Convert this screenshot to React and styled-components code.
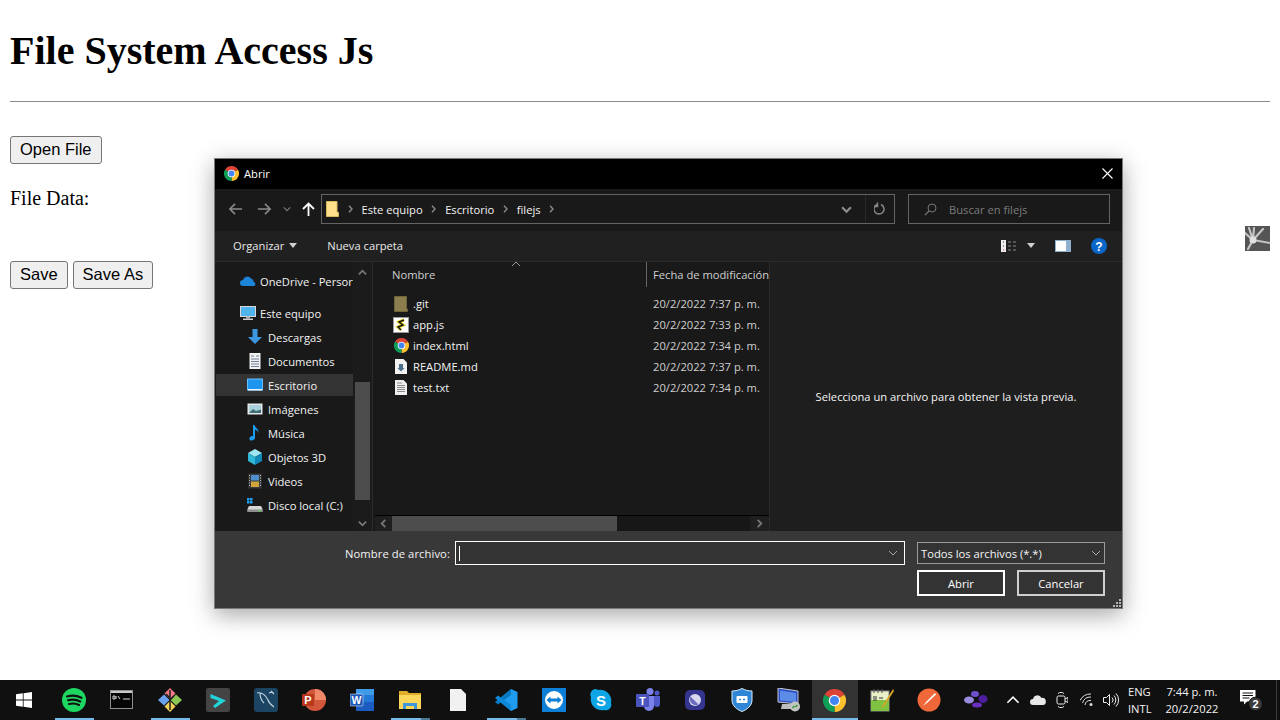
import React from 'react';
import styled, { createGlobalStyle } from 'styled-components';

const GlobalStyle = createGlobalStyle`
  html, body {
    margin: 0;
    height: 100%;
    background: #fff;
    overflow: hidden;
  }
`;

const Desktop = styled.div`
  position: relative;
  width: 1280px;
  height: 720px;
  display: flex;
  flex-direction: column;
  font-family: 'Liberation Serif', serif;
  color: #000;
`;

const PageBody = styled.main`
  flex: 1;
  padding: 0 10px;
`;

const PageTitle = styled.h1`
  margin: 29px 0 28px;
  font-size: 40px;
  line-height: 44px;
  font-weight: bold;
`;

const Rule = styled.hr`
  margin: 0 0 34px;
  border: 0;
  height: 1px;
  background: #8c8c8c;
`;

const PageButton = styled.button`
  height: 28px;
  margin-right: 5px;
  padding: 0 9px 1px;
  background: #efefef;
  border: 1px solid #767676;
  border-radius: 3px;
  font-family: 'Liberation Sans', sans-serif;
  font-size: 16.5px;
  color: #000;
`;

const FileLabel = styled.p`
  margin: 23px 0 52px;
  font-size: 20px;
  line-height: 22px;
`;

const FloatingThumb = styled.svg`
  position: absolute;
  left: 1245px;
  top: 226px;
  width: 25px;
  height: 25px;
`;

/* the open dialog */
const Dialog = styled.section`
  position: absolute;
  left: 214px;
  top: 158px;
  width: 907px;
  height: 449px;
  display: flex;
  flex-direction: column;
  border: 1px solid #7a7a7a;
  background: #191919;
  box-shadow: 0 6px 22px rgba(0, 0, 0, 0.35);
  font-family: 'Open Sans', 'Noto Sans', sans-serif;
  font-size: 11.2px;
  color: #fff;
`;

const TitleBar = styled.header`
  height: 30px;
  box-sizing: border-box;
  flex: none;
  display: flex;
  align-items: center;
  gap: 5px;
  padding: 0 9px 1px;
  background: #000;
`;

const TitleText = styled.span`
  flex: 1;
  color: #fff;
`;

const NavBand = styled.div`
  height: 42px;
  box-sizing: border-box;
  flex: none;
  display: flex;
  align-items: center;
  padding: 0 11px 2px 6px;
  background: #191919;
`;

const NavIcon = styled.span`
  width: ${(p) => p.$w || 29}px;
  flex: none;
  display: flex;
  justify-content: center;
  align-items: center;
`;

const AddressBar = styled.div`
  width: 574px;
  height: 30px;
  box-sizing: border-box;
  flex: none;
  display: flex;
  align-items: center;
  padding-left: 4px;
  border: 1px solid #636363;
  background: #191919;
`;

const Crumb = styled.span`
  color: #f2f2f2;
  white-space: nowrap;
`;

const CrumbChevron = styled.svg`
  width: 5px;
  height: 8px;
  margin: 0 9px 0 8.5px;
  flex: none;
`;

const AddressEnd = styled.div`
  margin-left: auto;
  display: flex;
  align-items: center;
  height: 100%;
`;

const AddressButton = styled.span`
  width: ${(p) => p.$w}px;
  height: 100%;
  display: flex;
  justify-content: center;
  align-items: center;
  border-left: ${(p) => (p.$split ? '1px solid #2a2a2a' : '0')};
`;

const SearchBox = styled.div`
  width: 202px;
  height: 30px;
  box-sizing: border-box;
  flex: none;
  margin-left: 13px;
  display: flex;
  align-items: center;
  gap: 12px;
  padding-left: 15px;
  border: 1px solid #636363;
  color: #7c7c7c;
`;

const ToolBar = styled.div`
  height: 31px;
  box-sizing: border-box;
  flex: none;
  display: flex;
  align-items: center;
  padding: 0 15px 1px 18px;
  background: #202020;
  border-bottom: 1px solid #2b2b2b;
  color: #e8e8e8;
`;

const ToolLabel = styled.span`
  display: flex;
  align-items: center;
  gap: 5px;
  margin-right: ${(p) => p.$gap || 0}px;
`;

const ToolGroup = styled.div`
  margin-left: auto;
  display: flex;
  align-items: center;
`;

const Caret = styled.span`
  width: 0;
  height: 0;
  margin: ${(p) => p.$margin || '0'};
  border-left: 4.5px solid transparent;
  border-right: 4.5px solid transparent;
  border-top: 5px solid #cfcfcf;
`;

const HelpIcon = styled.svg`
  width: 16px;
  height: 16px;
  margin-left: 20px;
`;

const Browser = styled.div`
  flex: 1;
  min-height: 0;
  display: flex;
`;

const Sidebar = styled.nav`
  width: 158px;
  box-sizing: border-box;
  flex: none;
  display: flex;
  overflow: hidden;
  border-right: 1px solid #2b2b2b;
`;

const TreeList = styled.div`
  width: 138px;
  box-sizing: border-box;
  flex: none;
  padding: 8px 0 0 1px;
`;

const TreeRow = styled.div`
  height: 22px;
  margin-bottom: ${(p) => p.$after || 2}px;
  display: flex;
  align-items: center;
  gap: ${(p) => (p.$child ? 5 : 4)}px;
  padding-left: ${(p) => (p.$child ? 31 : 24)}px;
  background: ${(p) => (p.$selected ? '#333333' : 'transparent')};
  color: #f2f2f2;
  white-space: nowrap;
  overflow: hidden;
`;

const TreeIcon = styled.svg`
  width: 16px;
  height: 16px;
  flex: none;
`;

const ScrollColumn = styled.div`
  flex: 1;
  display: flex;
  flex-direction: column;
  align-items: center;
  background: #1b1b1b;
`;

const ScrollEnd = styled.span`
  height: ${(p) => p.$h}px;
  box-sizing: border-box;
  padding-top: ${(p) => p.$top || 0}px;
  display: flex;
  align-items: center;
`;

const ScrollGap = styled.span`
  height: 100px;
`;

const ScrollThumb = styled.span`
  width: 15px;
  height: 118px;
  background: #4d4d4d;
`;

const ListPane = styled.div`
  width: 397px;
  box-sizing: border-box;
  flex: none;
  position: relative;
  display: flex;
  flex-direction: column;
  border-right: 1px solid #2b2b2b;
`;

const SortMark = styled.svg`
  position: absolute;
  left: 138px;
  top: -1px;
  width: 10px;
  height: 6px;
`;

const ListHead = styled.div`
  height: 25px;
  flex: none;
  display: flex;
  align-items: flex-start;
  color: #cfcfcf;
  overflow: hidden;
`;

const HeadName = styled.span`
  width: 274px;
  height: 25px;
  flex: none;
  line-height: 25px;
  box-sizing: border-box;
  padding-left: 19px;
  border-right: 1px solid #666;
`;

const HeadDate = styled.span`
  padding-left: 6px;
  line-height: 25px;
  white-space: nowrap;
`;

const ListRows = styled.div`
  flex: 1;
  padding-top: 6px;
`;

const FileRow = styled.div`
  height: 21px;
  display: flex;
  align-items: center;
`;

const FileName = styled.span`
  width: 244px;
  box-sizing: border-box;
  flex: none;
  padding-left: 4px;
  color: #f2f2f2;
`;

const FileIconSlot = styled.span`
  width: 16px;
  margin-left: 20px;
  display: flex;
  justify-content: center;
  flex: none;
`;

const FileDate = styled.span`
  color: #cfcfcf;
  white-space: nowrap;
`;

const HScroll = styled.div`
  height: 16px;
  box-sizing: border-box;
  flex: none;
  display: flex;
  align-items: center;
  margin-left: 2px;
  background: #171717;
  border-top: 1px solid #000;
`;

const HArrow = styled.span`
  width: ${(p) => p.$w}px;
  height: 100%;
  flex: none;
  display: flex;
  justify-content: center;
  align-items: center;
  background: #1f1f1f;
`;

const HThumb = styled.span`
  width: 225px;
  height: 100%;
  background: #4d4d4d;
`;

const HTrack = styled.span`
  flex: 1;
`;

const PreviewPane = styled.div`
  flex: 1;
  display: flex;
  justify-content: center;
  align-items: center;
  background: #1e1e1e;
  color: #f5f5f5;
`;

const Footer = styled.footer`
  height: 77px;
  flex: none;
  position: relative;
  box-sizing: border-box;
  padding: 10px 17px 0 0;
  display: flex;
  flex-direction: column;
  align-items: flex-end;
  gap: 5px;
  background: #383838;
`;

const FooterRow = styled.div`
  display: flex;
  align-items: center;
`;

const FieldLabel = styled.label`
  margin-right: 5px;
  letter-spacing: 0.1px;
  color: #f5f5f5;
`;

const NameField = styled.div`
  width: 450px;
  height: 24px;
  box-sizing: border-box;
  margin-right: 12px;
  display: flex;
  align-items: center;
  justify-content: space-between;
  padding: 0 6px 0 3px;
  border: 1px solid #fff;
  background: #333;
`;

const TextCaret = styled.span`
  width: 1px;
  height: 15px;
  background: #fff;
`;

const TypeSelect = styled.div`
  width: 188px;
  height: 22px;
  box-sizing: border-box;
  display: flex;
  align-items: center;
  justify-content: space-between;
  padding: 0 3px 0 3px;
  border: 1px solid #9b9b9b;
  background: #333;
  color: #f5f5f5;
`;

const DialogButton = styled.button`
  width: 88px;
  height: 26px;
  margin-left: ${(p) => p.$left || 0}px;
  padding: 0;
  background: #333;
  border: ${(p) => (p.$primary ? '2px solid #fff' : '2px solid #cfcfcf')};
  font: inherit;
  color: #fff;
`;

const ResizeGrip = styled.svg`
  position: absolute;
  right: 1px;
  bottom: 1px;
  width: 9px;
  height: 9px;
`;

/* the taskbar */
const Taskbar = styled.footer`
  height: 40px;
  flex: none;
  display: flex;
  align-items: stretch;
  background: #101010;
  font-family: 'Open Sans', 'Noto Sans', sans-serif;
  font-size: 11.2px;
  color: #f2f2f2;
`;

const StartButton = styled.div`
  width: 50px;
  flex: none;
  display: flex;
  justify-content: center;
  align-items: center;
  padding-right: 2px;
  box-sizing: border-box;
`;

const TaskItem = styled.div`
  position: relative;
  width: ${(p) => p.$w || 47.33}px;
  flex: none;
  display: flex;
  justify-content: center;
  align-items: center;
  background: ${(p) => (p.$active ? '#333333' : 'transparent')};
  &::after {
    content: '';
    display: ${(p) => (p.$open || p.$active ? 'block' : 'none')};
    position: absolute;
    left: ${(p) => (p.$active ? 0 : 4.5)}px;
    right: ${(p) => (p.$active ? 0 : 4.5)}px;
    bottom: 0;
    height: 2px;
    background: ${(p) =>
      p.$stacked ? 'linear-gradient(90deg, #76b9ed 76%, #4d7894 76%)' : '#76b9ed'};
  }
`;

const TaskIcon = styled.svg`
  width: 24px;
  height: 24px;
`;

const TrayGroup = styled.div`
  display: flex;
  align-items: stretch;
  margin-left: 1px;
`;

const TrayIcon = styled.span`
  width: 24.5px;
  flex: none;
  display: flex;
  justify-content: center;
  align-items: center;
`;

const LangBlock = styled.div`
  width: 29px;
  flex: none;
  margin-left: 4.5px;
  display: flex;
  flex-direction: column;
  justify-content: center;
  line-height: 17px;
`;

const ClockBlock = styled.div`
  width: 70px;
  flex: none;
  display: flex;
  flex-direction: column;
  justify-content: center;
  align-items: center;
  line-height: 17px;
  white-space: nowrap;
`;

const NotifyButton = styled.div`
  width: 49px;
  flex: none;
  display: flex;
  justify-content: center;
  align-items: center;
  border-right: 1px solid #3c3c3c;
`;

const ChromeIcon = ({ size = 16 }) => (
  <svg width={size} height={size} viewBox="0 0 24 24">
    <path d="M12 12 1.6 6A12 12 0 0 1 22.4 6Z" fill="#db4437" />
    <path d="M12 12 22.4 6A12 12 0 0 1 12 24Z" fill="#fbc02d" />
    <path d="M12 12 12 24A12 12 0 0 1 1.6 6Z" fill="#0f9d58" />
    <circle cx="12" cy="12" r="6" fill="#fff" />
    <circle cx="12" cy="12" r="4.7" fill="#4285f4" />
  </svg>
);

const Chevron = ({ dir = 'down', color = '#aaa', size = 10, weight = 1.6 }) => {
  const d = {
    down: 'M1 3 5 7 9 3',
    up: 'M1 7 5 3 9 7',
    left: 'M7 1 3 5 7 9',
    right: 'M3 1 7 5 3 9',
  }[dir];
  return (
    <svg width={size} height={size} viewBox="0 0 10 10">
      <path d={d} fill="none" stroke={color} strokeWidth={weight} />
    </svg>
  );
};

const Arrow = ({ dir, color }) => (
  <svg width="15" height="14" viewBox="0 0 16 14" style={{ transform: dir === 'right' ? 'scaleX(-1)' : 'none' }}>
    <path d="M15 7H2M7.5 1.5 2 7l5.5 5.5" fill="none" stroke={color} strokeWidth="1.7" />
  </svg>
);

const CrumbMark = () => (
  <CrumbChevron viewBox="0 0 5 8">
    <path d="M1 .8 4 4 1 7.2" fill="none" stroke="#8a8a8a" strokeWidth="1.4" />
  </CrumbChevron>
);

const FolderSmall = () => (
  <svg width="13" height="16" viewBox="0 0 13 16">
    <path d="M.5.5h10.5v10.5l1.5 .5v4H.5Z" fill="#ffe08a" stroke="#d9b75f" />
  </svg>
);

const treeIcons = {
  onedrive: (
    <path d="M3 13a3 3 0 0 1 0-6 4.5 4.5 0 0 1 8-1.5 3.6 3.6 0 0 1 2.6 3.6A2 2 0 0 1 14 13Z" fill="#1c84d9" />
  ),
  pc: (
    <>
      <rect x="0.5" y="1.5" width="15" height="10" fill="#4fb5ec" stroke="#d8d8d8" />
      <rect x="6" y="11.5" width="4" height="2" fill="#aaa" />
      <rect x="3" y="13.5" width="10" height="1.5" fill="#d0d0d0" />
    </>
  ),
  down: <path d="M5.5 0h5v8H15l-7 7-7-7h4.5Z" fill="#3d97e0" />,
  doc: (
    <>
      <path d="M2.5 0h11v16h-11Z" fill="#f2f2f2" />
      <path d="M4 3h3M9 3h3M4 6h8M4 8.5h8M4 11h8M4 13.5h8" stroke="#6d7f94" strokeWidth="1" />
    </>
  ),
  desk: (
    <>
      <rect x="0.5" y="2" width="15" height="11" fill="#1c95ee" stroke="#68bdf5" />
      <rect x="1" y="12" width="14" height="1.5" fill="#e6f4ff" />
    </>
  ),
  image: (
    <>
      <rect x="0.5" y="2.5" width="15" height="11" fill="#e6e6e6" />
      <rect x="2" y="4" width="12" height="8" fill="#a9d1dc" />
      <path d="M2 12 6 8l3 2 5-1.5V12Z" fill="#3c6f73" />
    </>
  ),
  music: <path d="M6 0h1.5c.5 3 4.5 3.500 4 8-.8-2.500-2.500-3-3.500-3.300V12.500C8 14.500 5.800 16 3.800 15.500 1.800 15 2 12.500 3.800 11.500c.8-.4 1.600-.5 2.200-.3Z" fill="#1c9cf0" />,
  cube: (
    <>
      <path d="M8 0 15 4 8 8 1 4Z" fill="#9ee7f2" />
      <path d="M1 4 8 8V16L1 12Z" fill="#2fb7d6" />
      <path d="M15 4 8 8V16L15 12Z" fill="#1087b8" />
    </>
  ),
  video: (
    <>
      <rect x="1.500" y="0.500" width="13" height="15" fill="#3b3b3b" />
      <rect x="4" y="2" width="8" height="5.500" fill="#4e8fd0" />
      <rect x="4" y="8.500" width="8" height="5.500" fill="#d0a53d" />
      <path d="M2.500 2v12M13.500 2v12" stroke="#bbb" strokeDasharray="1 1.500" />
    </>
  ),
  disk: (
    <>
      <path d="M0 1h2.500v2.500H0ZM3 1h2.500v2.500H3ZM0 4h2.500v2.500H0ZM3 4h2.500v2.500H3Z" fill="#1ea1f1" />
      <path d="M2 9h12l1.500 3v3H.5v-3Z" fill="#d6d6d6" />
      <rect x="1" y="12.500" width="14" height="2.500" fill="#8d8d8d" />
      <rect x="11.500" y="13" width="2" height="1.500" fill="#48e048" />
    </>
  ),
};

const TreeItem = ({ icon, label, child, selected, after }) => (
  <TreeRow $child={child} $selected={selected} $after={after}>
    <TreeIcon viewBox="0 0 16 16">{treeIcons[icon]}</TreeIcon>
    {label}
  </TreeRow>
);

const fileIcons = {
  git: (
    <svg width="14" height="16" viewBox="0 0 14 16">
      <path d="M.5.5h12v12l1 .5v2.500H.5Z" fill="#8b7d4e" stroke="#6f6439" />
    </svg>
  ),
  js: (
    <svg width="16" height="16" viewBox="0 0 16 16">
      <rect x="0.500" y="0.500" width="15" height="15" fill="#fff" stroke="#999" />
      <path d="M11 3 6 5l4 3-5 2 3 3" fill="none" stroke="#e6d21e" strokeWidth="3" />
      <path d="M11 3 6 5l4 3-5 2 3 3" fill="none" stroke="#111" strokeWidth="1.400" />
    </svg>
  ),
  html: <ChromeIcon size={15} />,
  md: (
    <svg width="12" height="15" viewBox="0 0 12 15">
      <path d="M0 0h8.500L12 3.500V15H0Z" fill="#f2f2f2" />
      <path d="M4 5h4v4h1.500L6 12.500 2.500 9H4Z" fill="#4b6f8a" />
    </svg>
  ),
  txt: (
    <svg width="12" height="15" viewBox="0 0 12 15">
      <path d="M0 0h8.500L12 3.500V15H0Z" fill="#efefef" />
      <path d="M2 3h5M2 5.500h8M2 7.500h8M2 9.500h8M2 11.500h8" stroke="#8a8a8a" />
    </svg>
  ),
};

const files = [
  { name: '.git', date: '20/2/2022 7:37 p. m.', icon: 'git' },
  { name: 'app.js', date: '20/2/2022 7:33 p. m.', icon: 'js' },
  { name: 'index.html', date: '20/2/2022 7:34 p. m.', icon: 'html' },
  { name: 'README.md', date: '20/2/2022 7:37 p. m.', icon: 'md' },
  { name: 'test.txt', date: '20/2/2022 7:34 p. m.', icon: 'txt' },
];

const taskIcons = [
  {
    key: 'spotify',
    w: 48,
    open: true,
    draw: (
      <>
        <circle cx="12" cy="12" r="12" fill="#1ed760" />
        <path d="M5 8.500c5-1.500 10-1 14.500 1.300M6 12.300c4.300-1.200 8.500-.8 12.300 1.200M7 16c3.500-.9 7-.6 10 1" fill="none" stroke="#111" strokeWidth="2.100" strokeLinecap="round" />
      </>
    ),
  },
  {
    key: 'cmd',
    w: 48,
    draw: (
      <>
        <rect x="0.500" y="2.500" width="22" height="18" fill="#050505" stroke="#8e8e8e" />
        <rect x="1" y="3" width="21" height="2" fill="#c9c9c9" />
        <path d="M3 8h2v3H3ZM6 8v3M8 8l2 3M13 11h7" stroke="#d8d8d8" fill="none" />
      </>
    ),
  },
  {
    key: 'git',
    w: 48,
    open: true,
    draw: (
      <>
        <path d="M12 0 17.500 5.500 12 11 6.500 5.500Z" fill="#ee7a85" />
        <path d="M12.500 12 18 6.500 24 12 18 17.500Z" fill="#8cc653" />
        <path d="M11.500 12 6 6.500 0 12 6 17.500Z" fill="#6aa2ef" />
        <path d="M12 13 17.500 18.500 12 24 6.500 18.500Z" fill="#f2d25a" />
        <path d="M12 2v20M8 6l4 4v4M16 8l-4 4" stroke="#222" strokeWidth="1.500" fill="none" />
      </>
    ),
  },
  {
    key: 'sublime',
    w: 48,
    draw: (
      <>
        <rect width="24" height="24" rx="2" fill="#444" />
        <path d="M4.500 6 20 12.500 9 20 7 18 13 13 4.500 10Z" fill="#21d3d8" />
      </>
    ),
  },
  {
    key: 'mysql',
    w: 48,
    draw: (
      <>
        <rect width="24" height="24" rx="3" fill="#1c4563" />
        <path d="M3 5c5-1 8 1 11 7 1 3 3 5 6 7M6 5c0 4 1 7 4 10M17 3l3 3M15 5l3-1" fill="none" stroke="#c8d8e4" strokeWidth="1.100" />
      </>
    ),
  },
  {
    key: 'ppt',
    w: 48,
    draw: (
      <>
        <circle cx="13" cy="12" r="11" fill="#d2563a" />
        <path d="M13 1A11 11 0 0 1 24 12H13Z" fill="#f0886a" />
        <rect x="0" y="6" width="12" height="12" rx="1" fill="#b7381c" />
        <text x="6" y="16" fontSize="11" fontFamily="Liberation Sans" fontWeight="bold" fill="#fff" textAnchor="middle">P</text>
      </>
    ),
  },
  {
    key: 'word',
    w: 48,
    draw: (
      <>
        <rect x="6" y="1" width="18" height="22" rx="1" fill="#1a5cc0" />
        <rect x="6" y="1" width="18" height="6" fill="#3f9be8" />
        <rect x="6" y="7" width="18" height="7" fill="#2379d6" />
        <rect x="0" y="6" width="13" height="12" rx="1" fill="#1b57b5" stroke="#fff" strokeWidth="0.500" />
        <text x="6.500" y="16" fontSize="10.500" fontFamily="Liberation Sans" fontWeight="bold" fill="#fff" textAnchor="middle">W</text>
      </>
    ),
  },
  {
    key: 'explorer',
    w: 48,
    open: true,
    stacked: true,
    draw: (
      <>
        <path d="M1 3h8l2 2H23V21H1Z" fill="#e2ac2b" />
        <rect x="1" y="7" width="22" height="14" fill="#fbd75b" />
        <path d="M5 21v-6h14v6h-3v-3H8v3Z" fill="#3d97d8" />
      </>
    ),
  },
  {
    key: 'file',
    w: 48,
    draw: <path d="M4 1h11l5 5v17H4Z" fill="#f1f1f1" />,
  },
  {
    key: 'vscode',
    w: 48,
    open: true,
    stacked: true,
    draw: (
      <>
        <path d="M17 1 23.500 4v16L17 23 5 12Z" fill="#1f9cf0" />
        <path d="M17 1 1 14l3 2.500L17 7Z" fill="#0a77c2" />
        <path d="M1 10l3-2.500L17 17v6Z" fill="#0d88d8" />
      </>
    ),
  },
  {
    key: 'teamviewer',
    w: 48,
    draw: (
      <>
        <rect width="24" height="24" fill="#0e7fd6" />
        <circle cx="12" cy="12" r="9" fill="#fff" />
        <path d="M4.500 12 8.500 8.500v2h7v-2l4 3.500-4 3.500v-2h-7v2Z" fill="#0e7fd6" />
      </>
    ),
  },
  {
    key: 'skype',
    w: 46.8,
    draw: (
      <>
        <path d="M6 1a5 5 0 0 1 3 1A11 11 0 0 1 22 15a5.500 5.500 0 0 1-7 7A11 11 0 0 1 2 9 5.500 5.500 0 0 1 6 1Z" fill="#0ea5e6" />
        <text x="12" y="17.500" fontSize="15" fontFamily="Liberation Sans" fontWeight="bold" fill="#fff" textAnchor="middle">S</text>
      </>
    ),
  },
  {
    key: 'teams',
    w: 46.8,
    draw: (
      <>
        <circle cx="14" cy="3.500" r="3.500" fill="#7b83eb" />
        <circle cx="21" cy="5" r="2.500" fill="#5059c9" />
        <path d="M8 8h10v10a5 5 0 0 1-10 0Z" fill="#7b83eb" />
        <path d="M18 8h6v8a3 3 0 0 1-6 0Z" fill="#5059c9" />
        <rect x="0" y="6" width="13" height="13" rx="1" fill="#4b53bc" />
        <text x="6.500" y="16.500" fontSize="10.500" fontFamily="Liberation Sans" fontWeight="bold" fill="#fff" textAnchor="middle">T</text>
      </>
    ),
  },
  {
    key: 'linear',
    w: 46.8,
    draw: (
      <>
        <rect x="2" y="2" width="20" height="20" rx="5" fill="#34358f" />
        <circle cx="12" cy="12" r="6" fill="#d8d8ef" />
        <path d="M7.500 8.500a6 6 0 0 0 8 8Z" fill="#6a6cc0" />
      </>
    ),
  },
  {
    key: 'shield',
    w: 46.8,
    draw: (
      <>
        <path d="M2 3c4 0 7-1 10-2.500C15 2 18 3 22 3v9c0 6-5 9.500-10 11.500C7 21.500 2 18 2 12Z" fill="#2f86d6" stroke="#d8ecfb" />
        <rect x="6.500" y="8" width="11" height="7" rx="1" fill="#fff" />
        <path d="M9 11.500h2M13 11.500h2" stroke="#2f86d6" strokeWidth="1.500" />
      </>
    ),
  },
  {
    key: 'remote',
    w: 46.8,
    draw: (
      <>
        <path d="M1 0 21 3v13L1 14Z" fill="#2a4fc4" stroke="#c8c8c8" />
        <path d="M3 2.500 19 5v9L3 12.500Z" fill="#5d8be8" />
        <path d="M5 16h9l2 5H4Z" fill="#bdbdbd" />
        <circle cx="18" cy="18.500" r="5" fill="#c4c4c4" />
        <path d="M15.500 20l2-2M18.500 19l2-2" stroke="#2f9a2f" strokeWidth="1.500" />
      </>
    ),
  },
];

const afterChrome = [
  {
    key: 'npp',
    draw: (
      <>
        <rect x="1" y="3" width="18" height="20" fill="#e8f0c8" stroke="#888" />
        <rect x="1" y="12" width="18" height="11" fill="#7fc241" />
        <path d="M4 1v4M8 1v4M12 1v4" stroke="#555" />
        <path d="M4 8v5M6 8v5M9 10h4" stroke="#333" />
        <path d="M23 1 13 17l-2 3 3-1.500L24 3Z" fill="#d9a423" />
      </>
    ),
  },
  {
    key: 'postman',
    draw: (
      <>
        <circle cx="12" cy="12" r="11.500" fill="#f0683a" />
        <path d="M18 5 9.500 13.500 6 18l4.500-3.500L19 6.500Z" fill="#fff" />
      </>
    ),
  },
  {
    key: 'blobs',
    draw: (
      <>
        <ellipse cx="5" cy="12" rx="5" ry="3.500" fill="#9a8be0" />
        <ellipse cx="11" cy="6" rx="4" ry="3" fill="#6d4fcf" />
        <ellipse cx="19" cy="11" rx="4.500" ry="4" fill="#4d1f9e" />
        <ellipse cx="13" cy="17" rx="5" ry="2.500" fill="#6a2fc0" />
      </>
    ),
  },
];

export default function App() {
  return (
    <>
      <GlobalStyle />
      <Desktop>
        <PageBody>
          <PageTitle>File System Access Js</PageTitle>
          <Rule />
          <PageButton>Open File</PageButton>
          <FileLabel>File Data:</FileLabel>
          <PageButton>Save</PageButton>
          <PageButton>Save As</PageButton>
        </PageBody>

        <FloatingThumb viewBox="0 0 25 25">
          <rect width="25" height="25" fill="#555" />
          <path d="M8 14 0 7M8 14 4 2M8 14 9 2M8 14 18 3M8 14 25 17M8 14 3 23" fill="none" stroke="#c4c4c4" strokeWidth="2.200" strokeLinecap="round" />
          <circle cx="8" cy="14" r="3.500" fill="#e2e2e2" />
        </FloatingThumb>

        <Dialog>
          <TitleBar>
            <ChromeIcon size={15} />
            <TitleText>Abrir</TitleText>
            <svg width="11" height="11" viewBox="0 0 11 11">
              <path d="M.5.5l10 10M10.500.5l-10 10" stroke="#fff" strokeWidth="1.100" />
            </svg>
          </TitleBar>

          <NavBand>
            <NavIcon $w={29}><Arrow dir="left" color="#8a8a8a" /></NavIcon>
            <NavIcon $w={29}><Arrow dir="right" color="#8a8a8a" /></NavIcon>
            <NavIcon $w={16}><Chevron color="#777" size={8} /></NavIcon>
            <NavIcon $w={26}>
              <svg width="13" height="14" viewBox="0 0 13 14">
                <path d="M6.500 14V2M1 7l5.500-5.500L12 7" fill="none" stroke="#fff" strokeWidth="1.800" />
              </svg>
            </NavIcon>
            <AddressBar>
              <FolderSmall />
              <CrumbMark />
              <Crumb>Este equipo</Crumb>
              <CrumbMark />
              <Crumb>Escritorio</Crumb>
              <CrumbMark />
              <Crumb>filejs</Crumb>
              <CrumbMark />
              <AddressEnd>
                <AddressButton $w={37}><Chevron color="#8f8f8f" size={11} weight={2} /></AddressButton>
                <AddressButton $w={28} $split>
                  <svg width="13" height="14" viewBox="0 0 13 14">
                    <path d="M3 2.500A5 5 0 1 0 7 2.500" fill="none" stroke="#888" strokeWidth="1.500" />
                    <path d="M3.500 0v4H0" fill="none" stroke="#888" strokeWidth="1.500" transform="translate(0 .5)" />
                  </svg>
                </AddressButton>
              </AddressEnd>
            </AddressBar>
            <SearchBox>
              <svg width="13" height="13" viewBox="0 0 13 13">
                <circle cx="8" cy="5" r="4" fill="none" stroke="#777" />
                <path d="M5 8 .8 12.200" stroke="#777" strokeWidth="1.200" />
              </svg>
              Buscar en filejs
            </SearchBox>
          </NavBand>

          <ToolBar>
            <ToolLabel $gap={30}>Organizar<Caret /></ToolLabel>
            <ToolLabel>Nueva carpeta</ToolLabel>
            <ToolGroup>
              <svg width="16" height="12" viewBox="0 0 16 12">
                <rect width="5" height="12" fill="#eee" />
                <path d="M2 2h1M2 6h1" stroke="#333" />
                <path d="M2 10h1" stroke="#c33" />
                <path d="M7 2h3M12 2h3M7 6h3M12 6h3M7 10h3M12 10h3" stroke="#888" />
              </svg>
              <Caret $margin="0 20.500px 0 9.500px" />
              <svg width="16" height="12" viewBox="0 0 16 12">
                <rect width="16" height="12" fill="#8fb0cc" />
                <rect x="1" y="1" width="10" height="10" fill="#fff" />
              </svg>
              <HelpIcon viewBox="0 0 16 16">
                <circle cx="8" cy="8" r="8" fill="#0a66c8" />
                <text x="8" y="12.500" fontSize="12" fontFamily="Liberation Sans" fontWeight="bold" fill="#fff" textAnchor="middle">?</text>
              </HelpIcon>
            </ToolGroup>
          </ToolBar>

          <Browser>
            <Sidebar>
              <TreeList>
                <TreeItem icon="onedrive" label="OneDrive - Persor" after={10} />
                <TreeItem icon="pc" label="Este equipo" />
                <TreeItem child icon="down" label="Descargas" />
                <TreeItem child icon="doc" label="Documentos" />
                <TreeItem child selected icon="desk" label="Escritorio" />
                <TreeItem child icon="image" label="Imágenes" />
                <TreeItem child icon="music" label="Música" />
                <TreeItem child icon="cube" label="Objetos 3D" />
                <TreeItem child icon="video" label="Videos" />
                <TreeItem child icon="disk" label="Disco local (C:)" />
              </TreeList>
              <ScrollColumn>
                <ScrollEnd $h={20}><Chevron dir="up" color="#777" size={9} weight={2} /></ScrollEnd>
                <ScrollGap />
                <ScrollThumb />
                <ScrollEnd $h={31} $top={15}><Chevron color="#777" size={9} weight={2} /></ScrollEnd>
              </ScrollColumn>
            </Sidebar>

            <ListPane>
              <SortMark viewBox="0 0 10 6">
                <path d="M1 5 5 1l4 4" fill="none" stroke="#9a9a9a" />
              </SortMark>
              <ListHead>
                <HeadName>Nombre</HeadName>
                <HeadDate>Fecha de modificación</HeadDate>
              </ListHead>
              <ListRows>
                {files.map((f) => (
                  <FileRow key={f.name}>
                    <FileIconSlot>{fileIcons[f.icon]}</FileIconSlot>
                    <FileName>{f.name}</FileName>
                    <FileDate>{f.date}</FileDate>
                  </FileRow>
                ))}
              </ListRows>
              <HScroll>
                <HArrow $w={17}><Chevron dir="left" color="#777" size={9} weight={2} /></HArrow>
                <HThumb />
                <HTrack />
                <HArrow $w={19}><Chevron dir="right" color="#777" size={9} weight={2} /></HArrow>
              </HScroll>
            </ListPane>

            <PreviewPane>Selecciona un archivo para obtener la vista previa.</PreviewPane>
          </Browser>

          <Footer>
            <FooterRow>
              <FieldLabel>Nombre de archivo:</FieldLabel>
              <NameField>
                <TextCaret />
                <Chevron color="#aaa" size={10} weight={1} />
              </NameField>
              <TypeSelect>
                Todos los archivos (*.*)
                <Chevron color="#aaa" size={10} weight={1} />
              </TypeSelect>
            </FooterRow>
            <FooterRow>
              <DialogButton $primary>Abrir</DialogButton>
              <DialogButton $left={12}>Cancelar</DialogButton>
            </FooterRow>
            <ResizeGrip viewBox="0 0 9 9">
              <path d="M7 1h2v2H7ZM4 4h2v2H4ZM7 4h2v2H7ZM1 7h2v2H1ZM4 7h2v2H4ZM7 7h2v2H7Z" fill="#b5b5b5" />
            </ResizeGrip>
          </Footer>
        </Dialog>

        <Taskbar>
          <StartButton>
            <svg width="16" height="16" viewBox="0 0 16 16">
              <path d="M0 2.300 6.800 1.300V7.600H0ZM7.600 1.200 16 0V7.600H7.600ZM0 8.400H6.800V14.700L0 13.700ZM7.600 8.400H16V16L7.600 14.800Z" fill="#fff" />
            </svg>
          </StartButton>
          {taskIcons.map((t) => (
            <TaskItem key={t.key} $w={t.w} $open={t.open} $stacked={t.stacked}>
              <TaskIcon viewBox="0 0 24 24">{t.draw}</TaskIcon>
            </TaskItem>
          ))}
          <TaskItem $active $w={46}>
            <ChromeIcon size={23} />
          </TaskItem>
          {afterChrome.map((t) => (
            <TaskItem key={t.key}>
              <TaskIcon viewBox="0 0 24 24">{t.draw}</TaskIcon>
            </TaskItem>
          ))}
          <TrayGroup>
            <TrayIcon><Chevron dir="up" color="#fff" size={14} weight={1.1} /></TrayIcon>
            <TrayIcon>
              <svg width="16" height="10" viewBox="0 0 16 10">
                <path d="M3 10a3 3 0 0 1 0-6 4.500 4.500 0 0 1 8.500-1A3.500 3.500 0 0 1 13 10Z" fill="#e8e8e8" />
              </svg>
            </TrayIcon>
            <TrayIcon>
              <svg width="12" height="18" viewBox="0 0 12 18">
                <rect x="1" y="5" width="8" height="8" rx="1.500" fill="none" stroke="#eee" />
                <path d="M9 8l3-1.500v5L9 10M2 2.500c2-1.500 4-1.500 6 0M2 15.500c2 1.500 4 1.500 6 0" fill="none" stroke="#eee" />
              </svg>
            </TrayIcon>
            <TrayIcon>
              <svg width="14" height="14" viewBox="0 0 14 14">
                <path d="M0 7.500A12 12 0 0 1 11 1M2.500 10A8.500 8.500 0 0 1 11 4M5 12A5 5 0 0 1 11 7.500" fill="none" stroke="#ddd" />
                <circle cx="11" cy="11.500" r="1.500" fill="#ddd" />
              </svg>
            </TrayIcon>
            <TrayIcon>
              <svg width="16" height="14" viewBox="0 0 16 14">
                <path d="M.5 4.500h3l3-3v11l-3-3h-3Z" fill="none" stroke="#eee" />
                <path d="M9 4.500a3.500 3.500 0 0 1 0 5M11 2.500a6.500 6.500 0 0 1 0 9M13 .5a9.500 9.500 0 0 1 0 13" fill="none" stroke="#eee" />
              </svg>
            </TrayIcon>
          </TrayGroup>
          <LangBlock>
            <span>ENG</span>
            <span>INTL</span>
          </LangBlock>
          <ClockBlock>
            <span>7:44 p. m.</span>
            <span>20/2/2022</span>
          </ClockBlock>
          <NotifyButton>
            <svg width="24" height="24" viewBox="0 0 24 24">
              <path d="M1 2h15.500v11.500H8l-3 3v-3H1Z" fill="#fff" />
              <path d="M3.500 5h10.500M3.500 7.500h10.500M3.500 10h7" stroke="#111" />
              <circle cx="16.500" cy="16" r="6.800" fill="#3c3c3c" stroke="#111" />
              <text x="16.500" y="20" fontSize="11" fontFamily="Liberation Sans" fontWeight="bold" fill="#fff" textAnchor="middle">2</text>
            </svg>
          </NotifyButton>
        </Taskbar>
      </Desktop>
    </>
  );
}
